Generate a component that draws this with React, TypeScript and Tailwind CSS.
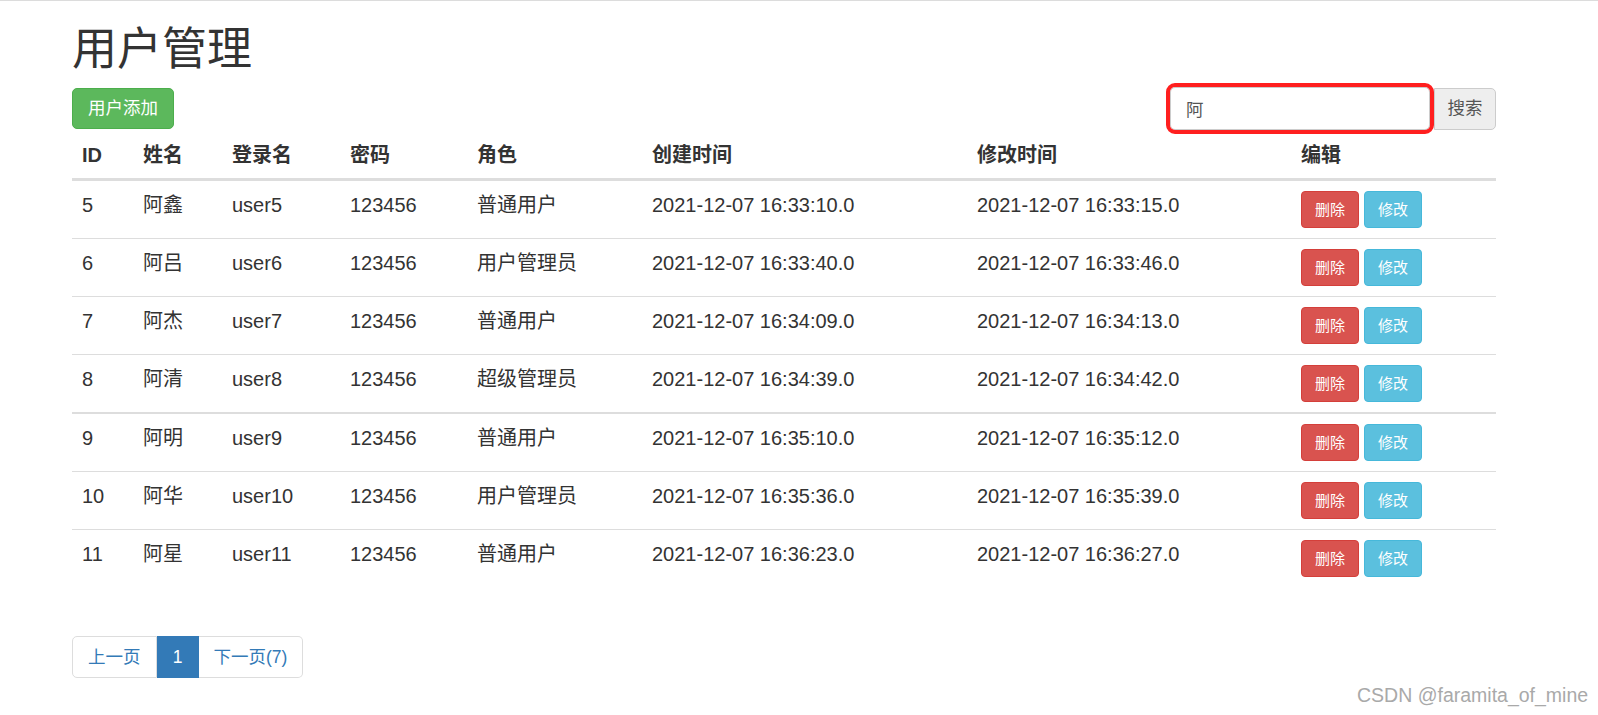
import React from "react";

type User = {
  id: number;
  name: string;
  login: string;
  password: string;
  role: string;
  created: string;
  updated: string;
};

const groups: User[][] = [
  [
    { id: 5, name: "阿鑫", login: "user5", password: "123456", role: "普通用户", created: "2021-12-07 16:33:10.0", updated: "2021-12-07 16:33:15.0" },
    { id: 6, name: "阿吕", login: "user6", password: "123456", role: "用户管理员", created: "2021-12-07 16:33:40.0", updated: "2021-12-07 16:33:46.0" },
    { id: 7, name: "阿杰", login: "user7", password: "123456", role: "普通用户", created: "2021-12-07 16:34:09.0", updated: "2021-12-07 16:34:13.0" },
    { id: 8, name: "阿清", login: "user8", password: "123456", role: "超级管理员", created: "2021-12-07 16:34:39.0", updated: "2021-12-07 16:34:42.0" },
  ],
  [
    { id: 9, name: "阿明", login: "user9", password: "123456", role: "普通用户", created: "2021-12-07 16:35:10.0", updated: "2021-12-07 16:35:12.0" },
    { id: 10, name: "阿华", login: "user10", password: "123456", role: "用户管理员", created: "2021-12-07 16:35:36.0", updated: "2021-12-07 16:35:39.0" },
    { id: 11, name: "阿星", login: "user11", password: "123456", role: "普通用户", created: "2021-12-07 16:36:23.0", updated: "2021-12-07 16:36:27.0" },
  ],
];

const headers = ["ID", "姓名", "登录名", "密码", "角色", "创建时间", "修改时间", "编辑"];
const widths = [61, 89, 118, 127, 175, 325, 324, 205];

const font = { fontFamily: '"Liberation Sans", "Noto Sans CJK SC", sans-serif' };

const App = () => {
  return (
    <div
      style={font}
      className="relative h-[715px] overflow-hidden border-t border-[#dcdcdc] bg-white text-[17.5px] leading-[25px] text-[#333]"
    >
      <div className="ml-[72px] w-[1424px]">
        <h1 className="mt-[24px] mb-[12px] text-[45px] leading-[50px] font-normal">用户管理</h1>

        <div className="flex h-[43px] items-center justify-between">
          <button className="h-[41px] rounded-[5px] border border-[#4cae4c] bg-[#5cb85c] px-[15px] text-white">
            用户添加
          </button>
          <div className="flex items-center">
            <input
              defaultValue="阿"
              className="h-[43px] w-[260px] rounded-[5px] border border-[#ccc] px-[15px] text-[#555] outline outline-4 outline-[#ff1f1f]"
              style={font}
            />
            <button className="ml-[4px] h-[42px] w-[62px] rounded-r-[5px] border border-[#ccc] bg-[#eeeeee] text-[#555]">
              搜索
            </button>
          </div>
        </div>

        <table className="mt-[3px] w-[1424px] table-fixed border-collapse text-[20px]">
          <colgroup>
            {widths.map((w, i) => (
              <col key={i} style={{ width: w }} />
            ))}
          </colgroup>
          <thead>
            <tr>
              {headers.map((h) => (
                <th key={h} className="border-b-[3px] border-[#ddd] px-[10px] py-[10px] text-left align-bottom font-bold">
                  {h}
                </th>
              ))}
            </tr>
          </thead>
          {groups.map((rows, gi) => (
            <tbody key={gi}>
              {rows.map((u, ri) => {
                const top =
                  ri === 0 && gi > 0 ? "border-t-2 border-[#ddd]" : ri === 0 ? "" : "border-t border-[#ddd]";
                const cell = `${top} px-[10px] pt-[12px] pb-[8px] align-top`;
                return (
                  <tr key={u.id}>
                    <td className={cell}>{u.id}</td>
                    <td className={cell}>{u.name}</td>
                    <td className={cell}>{u.login}</td>
                    <td className={cell}>{u.password}</td>
                    <td className={cell}>{u.role}</td>
                    <td className={cell}>{u.created}</td>
                    <td className={cell}>{u.updated}</td>
                    <td className={`${top} px-[10px] py-[10px] align-top`}>
                      <div className="flex gap-[5px]">
                        <button className="h-[37px] w-[58px] rounded-[4px] border border-[#d43f3a] bg-[#d9534f] text-[15px] text-white">
                          删除
                        </button>
                        <button className="h-[37px] w-[58px] rounded-[4px] border border-[#46b8da] bg-[#5bc0de] text-[15px] text-white">
                          修改
                        </button>
                      </div>
                    </td>
                  </tr>
                );
              })}
            </tbody>
          ))}
        </table>

        <div className="mt-[49px] flex h-[42px] w-fit">
          <a className="flex items-center rounded-l-[5px] border border-[#ddd] px-[15px] text-[#337ab7]">上一页</a>
          <a className="flex w-[42px] items-center justify-center border border-[#337ab7] bg-[#337ab7] text-white">1</a>
          <a className="flex items-center rounded-r-[5px] border border-l-0 border-[#ddd] px-[15px] text-[#337ab7]">
            下一页(7)
          </a>
        </div>
      </div>

      <div className="absolute left-[1357px] top-[682px] text-[19.5px] leading-[24px] text-[#a9a9a9]">
        CSDN @faramita_of_mine
      </div>
    </div>
  );
};

export default App;
